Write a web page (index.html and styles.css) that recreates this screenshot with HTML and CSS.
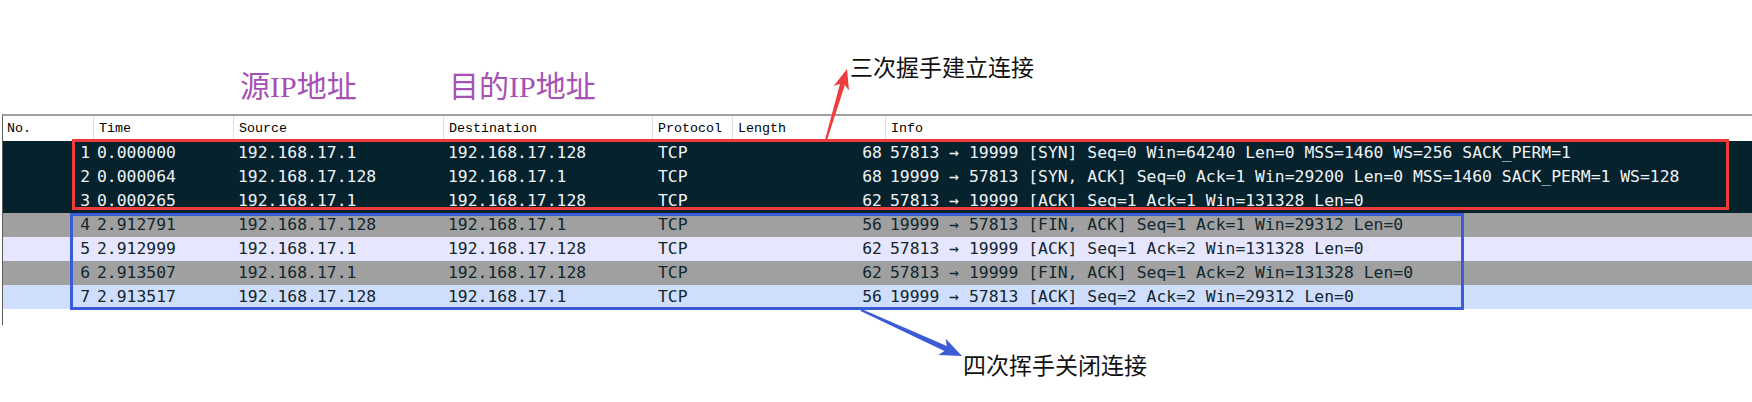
FILE: index.html
```html
<!DOCTYPE html>
<html lang="zh-CN">
<head>
<meta charset="utf-8">
<title>Wireshark TCP 三次握手 / 四次挥手</title>
<link rel="stylesheet" href="styles.css">
</head>
<body>
<div class="page">
  <div class="top-band cols">
    <div class="label label-src">源IP地址</div>
    <div class="label label-dst">目的IP地址</div>
    <div class="callout callout-top">三次握手建立连接</div>
  </div>

  <div class="panel">
    <div class="head cols">
      <div class="hc">No.</div>
      <div class="hc sep">Time</div>
      <div class="hc sep">Source</div>
      <div class="hc sep">Destination</div>
      <div class="hc sep">Protocol</div>
      <div class="hc sep">Length</div>
      <div class="hc sep">Info</div>
    </div>

    <div class="row cols dark">
      <div class="c r">1</div><div class="c t">0.000000</div><div class="c">192.168.17.1</div><div class="c">192.168.17.128</div><div class="c p">TCP</div><div class="c r">68</div><div class="c i">57813 → 19999 [SYN] Seq=0 Win=64240 Len=0 MSS=1460 WS=256 SACK_PERM=1</div>
    </div>
    <div class="row cols dark">
      <div class="c r">2</div><div class="c t">0.000064</div><div class="c">192.168.17.128</div><div class="c">192.168.17.1</div><div class="c p">TCP</div><div class="c r">68</div><div class="c i">19999 → 57813 [SYN, ACK] Seq=0 Ack=1 Win=29200 Len=0 MSS=1460 SACK_PERM=1 WS=128</div>
    </div>
    <div class="row cols dark">
      <div class="c r">3</div><div class="c t">0.000265</div><div class="c">192.168.17.1</div><div class="c">192.168.17.128</div><div class="c p">TCP</div><div class="c r">62</div><div class="c i">57813 → 19999 [ACK] Seq=1 Ack=1 Win=131328 Len=0</div>
    </div>
    <div class="row cols gray">
      <div class="c r">4</div><div class="c t">2.912791</div><div class="c">192.168.17.128</div><div class="c">192.168.17.1</div><div class="c p">TCP</div><div class="c r">56</div><div class="c i">19999 → 57813 [FIN, ACK] Seq=1 Ack=1 Win=29312 Len=0</div>
    </div>
    <div class="row cols lavender">
      <div class="c r">5</div><div class="c t">2.912999</div><div class="c">192.168.17.1</div><div class="c">192.168.17.128</div><div class="c p">TCP</div><div class="c r">62</div><div class="c i">57813 → 19999 [ACK] Seq=1 Ack=2 Win=131328 Len=0</div>
    </div>
    <div class="row cols gray">
      <div class="c r">6</div><div class="c t">2.913507</div><div class="c">192.168.17.1</div><div class="c">192.168.17.128</div><div class="c p">TCP</div><div class="c r">62</div><div class="c i">57813 → 19999 [FIN, ACK] Seq=1 Ack=2 Win=131328 Len=0</div>
    </div>
    <div class="row cols blue">
      <div class="c r">7</div><div class="c t">2.913517</div><div class="c">192.168.17.128</div><div class="c">192.168.17.1</div><div class="c p">TCP</div><div class="c r">56</div><div class="c i">19999 → 57813 [ACK] Seq=2 Ack=2 Win=29312 Len=0</div>
    </div>
    <div class="panel-rest"></div>
  </div>

  <div class="bottom-band">
    <div class="callout callout-bottom">四次挥手关闭连接</div>
  </div>

  <div class="box box-red"></div>
  <div class="box box-blue"></div>

  <svg class="arrows" width="1752" height="402" viewBox="0 0 1752 402" aria-hidden="true">
    <polygon class="arrow-red" points="825.04,139.72 840.06,83.63 833.66,85.91 847,69 849.0,90.45 844.86,85.05 826.96,140.28"/>
    <polygon class="arrow-blue" points="861.5,308.9 946.78,345.99 945.71,338.69 962,356 938.25,355.07 944.46,351.09 860.5,311.1"/>
  </svg>
</div>
</body>
</html>
```

FILE: styles.css
```css
html, body {
  margin: 0;
  padding: 0;
  background: #ffffff;
}

.page {
  position: relative;
  width: 1752px;
  height: 402px;
  overflow: hidden;
}

.cols {
  display: grid;
  grid-template-columns: 90px 140px 210px 209px 80px 153px 1fr;
}

/* ---------- top annotation band ---------- */
.top-band {
  height: 114px;
  margin-left: 3px;
}

.label {
  align-self: end;
  margin-bottom: 12px;
  font-family: "Liberation Serif", "Noto Sans CJK SC", serif;
  font-size: 30px;
  line-height: 30px;
  color: #a650b5;
  white-space: nowrap;
}

.label-src {
  grid-column: 3;
  padding-left: 7px;
}

.label-dst {
  grid-column: 4;
  padding-left: 6px;
}

.callout {
  font-family: "Noto Sans CJK SC", "Noto Sans", sans-serif;
  font-size: 23px;
  line-height: 23px;
  color: #111111;
  white-space: nowrap;
}

.callout-top {
  grid-column: 6;
  align-self: start;
  margin-top: 55px;
  margin-left: 118px;
}

/* ---------- packet list panel ---------- */
.panel {
  margin-left: 2px;
  border-left: 1px solid #5c5c5c;
  border-top: 2px solid #a0a0a0;
  height: 209px;
}

.head {
  height: 25px;
  background: #ffffff;
  font-family: "Liberation Mono", monospace;
  font-size: 13.33px;
  line-height: 25px;
  color: #000000;
}

.hc {
  padding-left: 4px;
  white-space: nowrap;
  overflow: hidden;
}

.hc.sep {
  border-left: 1px solid #dedede;
  padding-left: 5px;
}

.row {
  height: 24px;
  font-family: "DejaVu Sans Mono", monospace;
  font-size: 16.4px;
  line-height: 24px;
  color: #12272e;
}

.c {
  padding-left: 5px;
  white-space: nowrap;
}

.c.r {
  text-align: right;
  padding-left: 0;
  padding-right: 3px;
}

.c.t {
  padding-left: 4px;
}

.c.p {
  padding-left: 6px;
}

.c.i {
  padding-left: 5px;
}

.dark {
  background: #06222c;
  color: #eef3f7;
}

.gray {
  background: #a0a0a0;
}

.lavender {
  background: #e7e6ff;
}

.blue {
  background: #cfdefd;
}

.panel-rest {
  height: 16px;
}

/* ---------- bottom annotation band ---------- */
.bottom-band {
  padding-top: 28px;
  padding-left: 963px;
}

/* ---------- overlays ---------- */
.box {
  position: absolute;
  box-sizing: border-box;
  border: 3px solid;
  pointer-events: none;
}

.box-red {
  left: 72px;
  top: 139px;
  width: 1657px;
  height: 71px;
  border-color: #ef3b3b;
}

.box-blue {
  left: 70px;
  top: 213px;
  width: 1394px;
  height: 97px;
  border-color: #3c5bd6;
}

.arrows {
  position: absolute;
  left: 0;
  top: 0;
  pointer-events: none;
}

.arrow-red {
  fill: #ef3b3b;
}

.arrow-blue {
  fill: #3c5bd6;
}
```
